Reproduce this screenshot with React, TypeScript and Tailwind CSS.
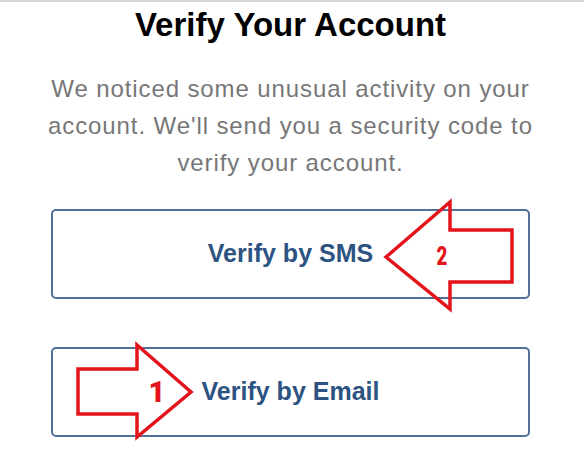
export default function App() {
  return (
    <div className="relative h-[449px] w-[584px] overflow-hidden border-t-2 border-[#d6d6d6] bg-white font-['Liberation_Sans',Arial,sans-serif]">
      {/* Heading */}
      <div className="w-[581px]">
        <h1 className="mt-1 text-center text-[33px] font-bold leading-[38px] text-black">Verify Your Account</h1>
        <p className="mt-[26px] text-center text-[24px] leading-[37px] tracking-[0.9px] text-[#777]">
          We noticed some unusual activity on your
          <br />
          account. We'll send you a security code to
          <br />
          verify your account.
        </p>
      </div>

      {/* Options */}
      <div className="ml-[51px] mt-[28px] flex w-[479px] flex-col gap-[48px]">
        {['Verify by SMS', 'Verify by Email'].map((label) => (
          <button
            key={label}
            className="flex h-[90px] items-center justify-center rounded-[5px] border-2 border-[#52719a] bg-white text-[25px] font-bold text-[#2c5381]"
          >
            {label}
          </button>
        ))}
      </div>

      {/* Red annotation arrows */}
      <svg className="pointer-events-none absolute inset-0" width="584" height="449" viewBox="0 0 584 449">
        <polygon
          points="386,255 450,200 450,228 512,228 512,280 450,280 450,307"
          fill="none"
          stroke="#e3141b"
          strokeWidth="3.5"
        />
        <polygon
          points="78,367 137,367 137,343 191,390 137,435 137,412 78,412"
          fill="none"
          stroke="#e3141b"
          strokeWidth="3.5"
        />
      </svg>
      <span className="absolute left-[432px] top-[242px] w-[20px] scale-x-[0.75] text-center font-['Roboto',sans-serif] text-[25px] font-black leading-none text-[#e3141b]">
        2
      </span>
      <span className="absolute left-[147px] top-[376px] w-[20px] text-center font-['Roboto',sans-serif] text-[29px] font-black leading-none text-[#e3141b]">
        1
      </span>
    </div>
  )
}
